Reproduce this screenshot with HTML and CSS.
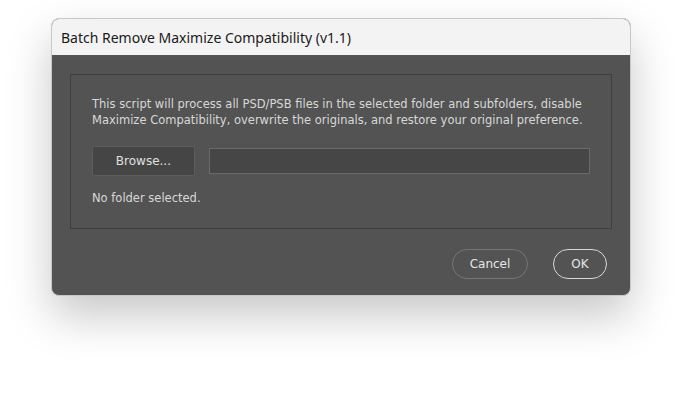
FILE: index.html
```html
<!DOCTYPE html>
<html lang="en">
<head>
    <meta charset="UTF-8">
    <title>Batch Remove Maximize Compatibility</title>
    <link rel="stylesheet" href="styles.css">
</head>
<body>
    <div class="dialog">
        <div class="titlebar">Batch Remove Maximize Compatibility (v1.1)</div>
        <div class="content">
            <div class="panel">
                <p class="desc">This script will process all PSD/PSB files in the selected folder and subfolders, disable<br>Maximize Compatibility, overwrite the originals, and restore your original preference.</p>
                <div class="picker">
                    <button class="browse">Browse...</button>
                    <div class="path"></div>
                </div>
                <p class="status">No folder selected.</p>
            </div>
            <div class="actions">
                <button class="pill cancel">Cancel</button>
                <button class="pill ok">OK</button>
            </div>
        </div>
    </div>
</body>
</html>
```

FILE: styles.css
```css
* {
    margin: 0;
    padding: 0;
    box-sizing: border-box;
}

body {
    background: #fff;
    height: 395px;
    padding: 18px 0 0 51px;
    font-family: "DejaVu Sans", sans-serif;
}

.dialog {
    width: 580px;
    height: 278px;
    border-radius: 8px;
    overflow: hidden;
    border: 1px solid #c8c8c8;
    box-shadow: 0 20px 45px rgba(0,0,0,0.22);
    background: #535353;
    display: flex;
    flex-direction: column;
}

.titlebar {
    height: 36px;
    flex: 0 0 36px;
    background: #f3f3f3;
    color: #1a1a1a;
    font-family: "Noto Sans", sans-serif;
    font-size: 14px;
    padding: 9px 0 0 9px;
}

.content {
    flex: 1;
    padding: 19px 18px 0 18px;
}

.panel {
    height: 155px;
    border: 1px solid #3e3e3e;
    padding: 21px 21px 0 21px;
    color: #d8d8d8;
    font-size: 11.5px;
}

.desc {
    line-height: 16px;
}

.picker {
    display: flex;
    align-items: center;
    gap: 14px;
    margin-top: 18px;
}

.browse {
    width: 103px;
    height: 30px;
    background: #454545;
    border: 1px solid #5c5c5c;
    border-radius: 2px;
    color: #e0e0e0;
    font-family: inherit;
    font-size: 12px;
}

.path {
    width: 382px;
    height: 26px;
    background: #464646;
    border: 1px solid #6a6a6a;
}

.status {
    margin-top: 15px;
}

.actions {
    display: flex;
    justify-content: flex-end;
    gap: 25px;
    padding: 20px 5px 0 0;
}

.pill {
    height: 30px;
    border-radius: 15px;
    background: transparent;
    color: #e6e6e6;
    font-family: inherit;
    font-size: 12px;
}

.cancel {
    width: 76px;
    border: 1px solid #767676;
}

.ok {
    width: 54px;
    border: 1px solid #d8d8d8;
}
```
